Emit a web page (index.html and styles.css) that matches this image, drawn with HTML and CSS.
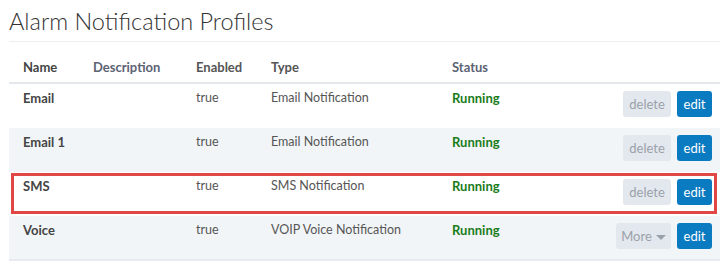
FILE: index.html
```html
<!DOCTYPE html>
<html>
<head>
<meta charset="utf-8">
<link rel="stylesheet" href="styles.css">
</head>
<body>
<div class="page">
  <h1 class="title">Alarm Notification Profiles</h1>
  <div class="table">
    <div class="row head">
      <div class="c name">Name</div>
      <div class="c desc">Description</div>
      <div class="c en">Enabled</div>
      <div class="c type">Type</div>
      <div class="c status">Status</div>
      <div class="c act"></div>
    </div>
    <div class="row">
      <div class="c name">Email</div>
      <div class="c desc"></div>
      <div class="c en">true</div>
      <div class="c type">Email Notification</div>
      <div class="c status run">Running</div>
      <div class="c act"><span class="btn muted">delete</span><span class="btn primary">edit</span></div>
    </div>
    <div class="row alt">
      <div class="c name">Email 1</div>
      <div class="c desc"></div>
      <div class="c en">true</div>
      <div class="c type">Email Notification</div>
      <div class="c status run">Running</div>
      <div class="c act"><span class="btn muted">delete</span><span class="btn primary">edit</span></div>
    </div>
    <div class="row marked">
      <div class="c name">SMS</div>
      <div class="c desc"></div>
      <div class="c en">true</div>
      <div class="c type">SMS Notification</div>
      <div class="c status run">Running</div>
      <div class="c act"><span class="btn muted">delete</span><span class="btn primary">edit</span></div>
    </div>
    <div class="row alt last">
      <div class="c name">Voice</div>
      <div class="c desc"></div>
      <div class="c en">true</div>
      <div class="c type">VOIP Voice Notification</div>
      <div class="c status run">Running</div>
      <div class="c act"><span class="btn muted more">More <span class="caret"></span></span><span class="btn primary">edit</span></div>
    </div>
  </div>
</div>
</body>
</html>
```
FILE: styles.css
```css
html, body {
  margin: 0;
  padding: 0;
  background: #ffffff;
}
body {
  font-family: "Lato", "Liberation Sans", sans-serif;
  color: #555;
}
.page {
  padding: 0 6px 0 9px;
}
.title {
  margin: 0;
  padding: 9px 0 7px 0;
  font-weight: 300;
  font-size: 23.5px;
  line-height: 25px;
  color: #333;
  border-bottom: 1px solid #eeeeee;
}
.table {
  display: flex;
  flex-direction: column;
}
.row {
  display: grid;
  grid-template-columns: 70px 103px 75px 181px 1fr 110px;
  height: 44px;
  box-sizing: border-box;
  font-size: 12.5px;
  line-height: 18px;
}
.row.head {
  height: 42px;
  align-items: end;
  border-bottom: 2px solid #e4e7eb;
  font-weight: 700;
  font-size: 13px;
  color: #5c6373;
}
.row.head .c {
  padding-bottom: 6px;
}
.row.alt {
  background: #f2f5f8;
}
.row.last {
  border-bottom: 2px solid #e7eaee;
  height: 45px;
}
.row.marked {
  position: relative;
}
.row.marked::after {
  content: "";
  position: absolute;
  top: 1px;
  left: 2px;
  right: 3px;
  bottom: 2px;
  border: 3px solid #e04846;
  pointer-events: none;
}
.c {
  padding: 5px 0 0 14px;
}
.name, .run {
  font-size: 13px;
}
.name {
  font-weight: 700;
  color: #444;
}
.en, .type {
  color: #555;
}
.run {
  font-weight: 700;
  color: #1a7d1a;
}
.act {
  display: flex;
  justify-content: flex-end;
  align-items: flex-start;
  gap: 6px;
  padding: 7px 8px 0 0;
}
.btn {
  display: inline-flex;
  align-items: center;
  justify-content: center;
  height: 26px;
  border-radius: 3px;
  font-size: 13px;
  padding: 0 7px;
  box-sizing: border-box;
}
.btn.muted {
  background: #e3e8ee;
  color: #9ba1a9;
  width: 48px;
}
.btn.more {
  width: 55px;
  gap: 4px;
}
.btn.primary {
  background: #0a7bc1;
  color: #ffffff;
  width: 35px;
}
.caret {
  display: inline-block;
  width: 0;
  height: 0;
  border-left: 5px solid transparent;
  border-right: 5px solid transparent;
  border-top: 5px solid #9ba1a9;
  margin-top: 2px;
}
```
